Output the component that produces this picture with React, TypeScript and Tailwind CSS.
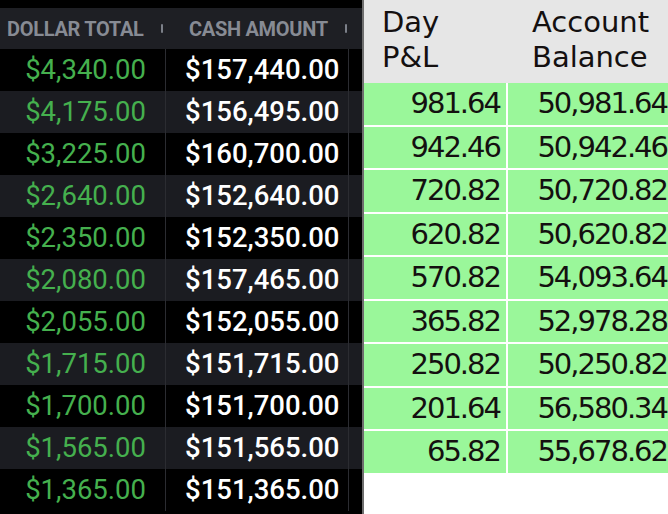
const dark = [
  { dollar: '$4,340.00', cash: '$157,440.00' },
  { dollar: '$4,175.00', cash: '$156,495.00' },
  { dollar: '$3,225.00', cash: '$160,700.00' },
  { dollar: '$2,640.00', cash: '$152,640.00' },
  { dollar: '$2,350.00', cash: '$152,350.00' },
  { dollar: '$2,080.00', cash: '$157,465.00' },
  { dollar: '$2,055.00', cash: '$152,055.00' },
  { dollar: '$1,715.00', cash: '$151,715.00' },
  { dollar: '$1,700.00', cash: '$151,700.00' },
  { dollar: '$1,565.00', cash: '$151,565.00' },
  { dollar: '$1,365.00', cash: '$151,365.00' },
];

const pnl = [
  { day: '981.64', balance: '50,981.64' },
  { day: '942.46', balance: '50,942.46' },
  { day: '720.82', balance: '50,720.82' },
  { day: '620.82', balance: '50,620.82' },
  { day: '570.82', balance: '54,093.64' },
  { day: '365.82', balance: '52,978.28' },
  { day: '250.82', balance: '50,250.82' },
  { day: '201.64', balance: '56,580.34' },
  { day: '65.82', balance: '55,678.62' },
];

function HeaderSep() {
  return <div className="w-[2px] h-[9px] bg-[#7c8089] rounded-sm" />;
}

function DarkTable() {
  return (
    <div className="w-[362px] shrink-0 bg-black font-['Roboto',sans-serif] flex flex-col">
      <div className="h-[8px]" />
      <div className="h-[41px] bg-[#1e1f24] flex items-center">
        <div className="w-[166px] flex items-center justify-between pl-[7px] pr-[3px]">
          <span className="text-[20px] font-bold text-[#878b94] tracking-[-0.3px]">DOLLAR TOTAL</span>
          <HeaderSep />
        </div>
        <div className="w-[183px] flex items-center justify-between pl-[23px] pr-[2px]">
          <span className="text-[20px] font-bold text-[#878b94] tracking-[-0.3px]">CASH AMOUNT</span>
          <HeaderSep />
        </div>
      </div>
      {dark.map((r, i) => (
        <div
          key={r.cash}
          className={`h-[42px] flex shrink-0 ${i % 2 === 1 ? 'bg-[#1b1c21]' : 'bg-black'}`}
        >
          <div className="w-[166px] border-r border-[#2b2c31] flex items-center justify-end pr-[19px] text-[27.5px] text-[#45b04e]">
            {r.dollar}
          </div>
          <div className="w-[183px] border-r border-[#2b2c31] flex items-center pl-[19px] text-[27.5px] font-medium text-white">
            {r.cash}
          </div>
          <div className="flex-1" />
        </div>
      ))}
    </div>
  );
}

function PnlTable() {
  return (
    <div className="flex-1 bg-white font-['DejaVu_Sans',sans-serif] text-[#141010] overflow-hidden">
      <div className="flex h-[83px] bg-[#e6e6e6] w-[308px]">
        <div className="w-[144px] pl-[18px] pt-[5px] text-[29px] leading-[35px]">
          Day
          <br />
          P&amp;L
        </div>
        <div className="w-[164px] pl-[24px] pt-[5px] text-[29px] leading-[35px]">
          Account
          <br />
          Balance
        </div>
      </div>
      {pnl.map((r) => (
        <div key={r.balance} className="flex h-[43.5px] w-[308px] border-b-2 border-white">
          <div className="w-[144px] bg-[#9af79a] border-r-2 border-white flex items-center justify-end pr-[6px] text-[29px] tracking-[-2px]">
            {r.day}
          </div>
          <div className="w-[164px] bg-[#9af79a] flex items-center justify-end pr-[5px] text-[29px] tracking-[-2px] whitespace-nowrap">
            {r.balance}
          </div>
        </div>
      ))}
    </div>
  );
}

export default function App() {
  return (
    <div className="w-[668px] h-[514px] flex overflow-hidden bg-white">
      <DarkTable />
      <div className="w-[2px] shrink-0 bg-[#6e6e6e]" />
      <PnlTable />
    </div>
  );
}
